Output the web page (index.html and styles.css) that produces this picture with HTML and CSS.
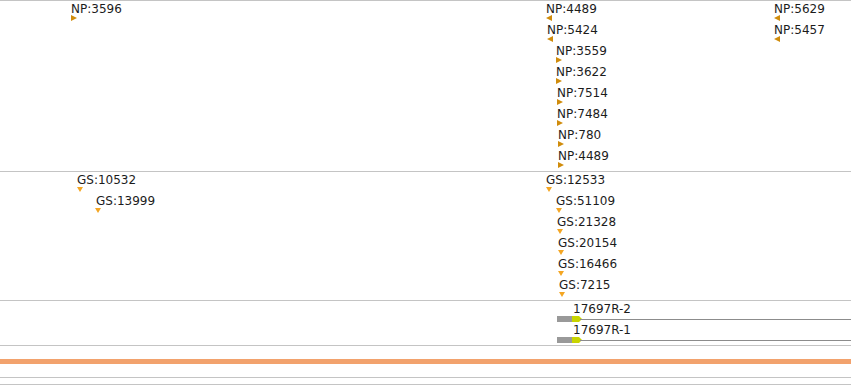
FILE: index.html
```html
<!DOCTYPE html>
<html>
<head>
<meta charset="utf-8">
<link rel="stylesheet" href="styles.css">
</head>
<body>
<div class="view">
  <div class="track np">
    <div class="feat fwd" style="left:71px;top:1px"><span class="lbl">NP:3596</span><i class="tri"></i></div>
    <div class="feat rev" style="left:546px;top:1px"><span class="lbl">NP:4489</span><i class="tri"></i></div>
    <div class="feat rev" style="left:547px;top:22px"><span class="lbl">NP:5424</span><i class="tri"></i></div>
    <div class="feat fwd" style="left:556px;top:43px"><span class="lbl">NP:3559</span><i class="tri"></i></div>
    <div class="feat fwd" style="left:556px;top:64px"><span class="lbl">NP:3622</span><i class="tri"></i></div>
    <div class="feat fwd" style="left:557px;top:85px"><span class="lbl">NP:7514</span><i class="tri"></i></div>
    <div class="feat fwd" style="left:557px;top:106px"><span class="lbl">NP:7484</span><i class="tri"></i></div>
    <div class="feat fwd" style="left:558px;top:127px"><span class="lbl">NP:780</span><i class="tri"></i></div>
    <div class="feat fwd" style="left:558px;top:148px"><span class="lbl">NP:4489</span><i class="tri"></i></div>
    <div class="feat rev" style="left:774px;top:1px"><span class="lbl">NP:5629</span><i class="tri"></i></div>
    <div class="feat rev" style="left:774px;top:22px"><span class="lbl">NP:5457</span><i class="tri"></i></div>
  </div>
  <div class="track gs">
    <div class="feat down" style="left:77px;top:1px"><span class="lbl">GS:10532</span><i class="tri"></i></div>
    <div class="feat down" style="left:95px;top:22px"><span class="lbl lbl-in">GS:13999</span><i class="tri"></i></div>
    <div class="feat down" style="left:546px;top:1px"><span class="lbl">GS:12533</span><i class="tri"></i></div>
    <div class="feat down" style="left:556px;top:22px"><span class="lbl">GS:51109</span><i class="tri"></i></div>
    <div class="feat down" style="left:557px;top:43px"><span class="lbl">GS:21328</span><i class="tri"></i></div>
    <div class="feat down" style="left:558px;top:64px"><span class="lbl">GS:20154</span><i class="tri"></i></div>
    <div class="feat down" style="left:558px;top:85px"><span class="lbl">GS:16466</span><i class="tri"></i></div>
    <div class="feat down" style="left:559px;top:106px"><span class="lbl">GS:7215</span><i class="tri"></i></div>
  </div>
  <div class="track tx">
    <div class="gene" style="left:557px;top:1px">
      <span class="lbl gene-lbl">17697R-2</span>
      <div class="model">
        <span class="utr"></span>
        <svg class="cds" width="10" height="6" viewBox="0 0 10 6"><polygon points="0,0 7,0 10,3 7,6 0,6" fill="#c8d400"/></svg>
        <span class="intron"></span>
      </div>
    </div>
    <div class="gene" style="left:557px;top:22px">
      <span class="lbl gene-lbl">17697R-1</span>
      <div class="model">
        <span class="utr"></span>
        <svg class="cds" width="10" height="6" viewBox="0 0 10 6"><polygon points="0,0 7,0 10,3 7,6 0,6" fill="#c8d400"/></svg>
        <span class="intron"></span>
      </div>
    </div>
  </div>
  <div class="gap"></div>
  <div class="bar"></div>
  <div class="gap"></div>
  <div class="thin"></div>
</div>
</body>
</html>
```
FILE: styles.css
```css
html, body {
  margin: 0;
  padding: 0;
  background: #ffffff;
}
body {
  font-family: "DejaVu Sans", Verdana, sans-serif;
  font-size: 12px;
  color: #1c1c1c;
}
.view {
  width: 851px;
  height: 385px;
  overflow: hidden;
  display: flex;
  flex-direction: column;
}
.track {
  position: relative;
  border-top: 1px solid #c4c4c4;
  flex: none;
}
.np { height: 170px; }
.gs { height: 128px; }
.tx { height: 44px; }
.gap {
  border-top: 1px solid #c4c4c4;
  height: 13px;
  flex: none;
}
.bar {
  height: 5px;
  background: #f2a26d;
  flex: none;
}
.view .bar + .gap {
  border-top: none;
  height: 13px;
}
.thin {
  border-top: 1px solid #c4c4c4;
  border-bottom: 1px solid #c4c4c4;
  height: 6px;
  flex: none;
}
.feat {
  position: absolute;
  display: flex;
  flex-direction: column;
  align-items: flex-start;
}
.lbl {
  display: block;
  line-height: 14px;
  white-space: nowrap;
}
.tri {
  display: block;
  width: 0;
  height: 0;
}
.fwd .tri {
  margin-top: -1px;
  border-left: 6px solid #d08c0c;
  border-top: 3px solid transparent;
  border-bottom: 3px solid transparent;
}
.rev .tri {
  margin-top: -1px;
  border-right: 6px solid #d08c0c;
  border-top: 3px solid transparent;
  border-bottom: 3px solid transparent;
}
.down .tri {
  margin-top: 0;
  border-top: 5px solid #f4a623;
  border-left: 3px solid transparent;
  border-right: 3px solid transparent;
}
.lbl-in {
  padding-left: 1px;
}
.gene {
  position: absolute;
  right: 0;
  display: flex;
  flex-direction: column;
}
.gene-lbl {
  padding-left: 16px;
}
.model {
  display: flex;
  align-items: center;
  height: 6px;
}
.utr {
  width: 15px;
  height: 6px;
  background: #999999;
  flex: none;
}
.cds {
  display: block;
  flex: none;
}
.intron {
  flex: 1;
  height: 1px;
  background: #8c8c8c;
  margin-left: -2px;
}
```
